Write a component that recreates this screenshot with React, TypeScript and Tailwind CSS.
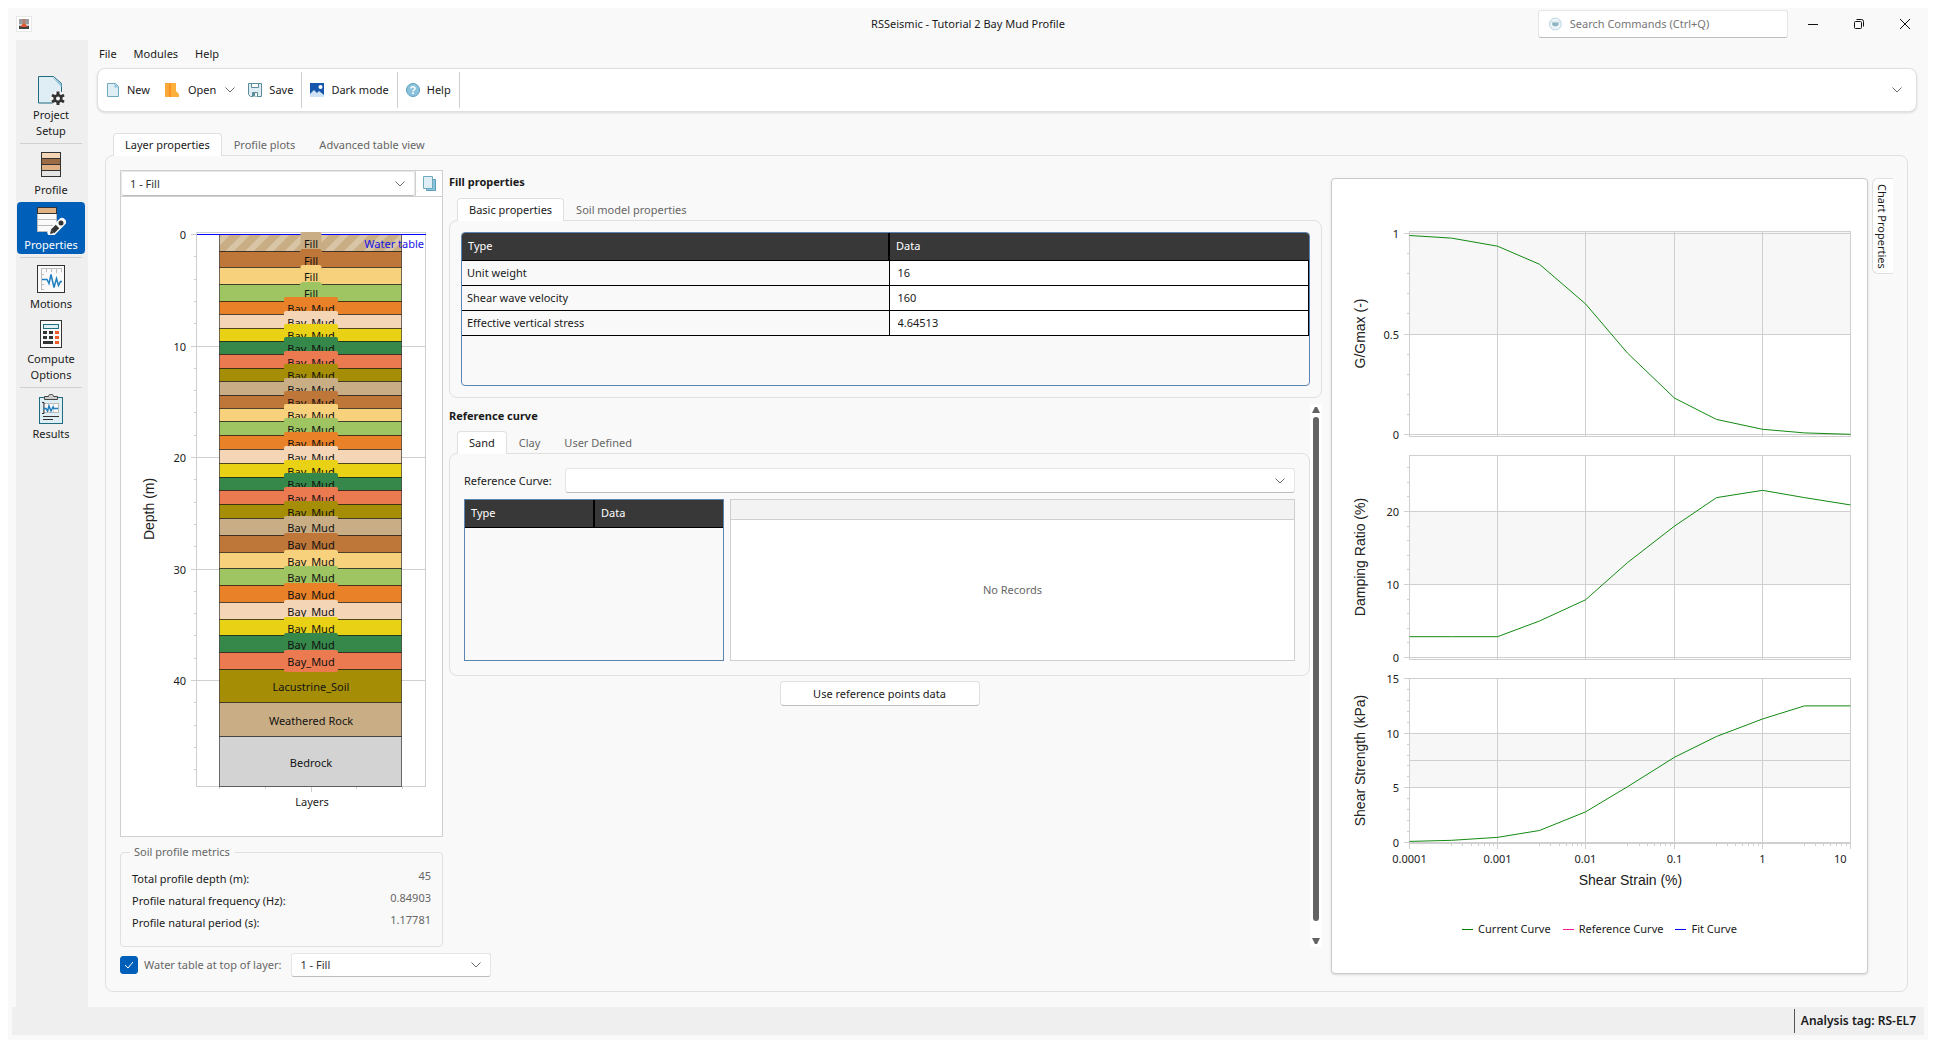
import { useState } from "react";
import type { ReactNode } from "react";
import clsx from "clsx";

/* ---------- data ---------- */

const palette = [
  "#c9ad84",
  "#be7739",
  "#f7d17c",
  "#9fc462",
  "#e88127",
  "#f4d6b6",
  "#e9d116",
  "#36884a",
  "#ec7a50",
  "#a58e06",
];

type Layer = { name: string; thickness: number; color: string };

const repeat = (name: string, thickness: number, count: number) =>
  Array.from({ length: count }, () => ({ name, thickness }));

const layers: Layer[] = [
  ...repeat("Fill", 1.5, 4),
  ...repeat("Bay_Mud", 1.2, 10),
  ...repeat("Bay_Mud", 1.25, 6),
  ...repeat("Bay_Mud", 1.5, 9),
  { name: "Lacustrine_Soil", thickness: 3 },
  { name: "Weathered Rock", thickness: 3 },
  { name: "Bedrock", thickness: 4.5 },
].map((l, i) => ({
  ...l,
  color: l.name === "Bedrock" ? "#d3d3d3" : palette[i % palette.length],
}));

const labelWidth: Record<string, number> = { Fill: 21, Bay_Mud: 54 };

const strains = [
  0.0001, 0.0003, 0.001, 0.003, 0.01, 0.03, 0.1, 0.3, 1, 3, 10,
];

const plots = [
  {
    title: "G/Gmax (-)",
    top: 52,
    bottom: 257,
    zero: 255,
    unit: 201,
    major: [0, 0.5, 1],
    lines: [0, 0.5, 1],
    minor: [0.1, 0.2, 0.3, 0.4, 0.6, 0.7, 0.8, 0.9],
    band: [0.5, 1],
    values: [0.99, 0.977, 0.937, 0.847, 0.65, 0.405, 0.181, 0.075, 0.026, 0.008, 0.001],
  },
  {
    title: "Damping Ratio (%)",
    top: 276,
    bottom: 480,
    zero: 478,
    unit: 7.3,
    major: [0, 10, 20],
    lines: [0, 10, 20],
    minor: [2, 4, 6, 8, 12, 14, 16, 18, 22, 24, 26],
    band: [10, 20],
    values: [2.85, 2.85, 2.85, 5, 7.9, 13, 18, 21.9, 22.9, 21.9, 20.9],
  },
  {
    title: "Shear Strength (kPa)",
    top: 499,
    bottom: 664,
    zero: 663,
    unit: 10.93,
    major: [0, 5, 10, 15],
    lines: [0, 5, 7.5, 10],
    minor: [1, 2, 3, 4, 6, 7, 8, 9, 11, 12, 13, 14],
    band: [5, 10],
    values: [0.1, 0.2, 0.47, 1.1, 2.8, 5.1, 7.8, 9.7, 11.3, 12.5, 12.5],
  },
];

const basicRows = [
  ["Unit weight", "16"],
  ["Shear wave velocity", "160"],
  ["Effective vertical stress", "4.64513"],
];

const metrics = [
  ["Total profile depth (m):", "45"],
  ["Profile natural frequency (Hz):", "0.84903"],
  ["Profile natural period (s):", "1.17781"],
];

/* ---------- icons ---------- */

const Chevron = ({ className }: { className?: string }) => (
  <svg width="10" height="6" viewBox="0 0 10 6" className={className}>
    <path d="M.5.5 5 5 9.500.5" fill="none" stroke="#6b6b6b" />
  </svg>
);

const AppIcon = () => (
  <svg width="16" height="16" viewBox="0 0 16 16">
    <rect x=".5" y=".5" width="15" height="15" fill="#fff" stroke="#e8e8e8" />
    <rect x="3" y="3" width="10" height="6" fill="#9b9b9b" />
    <rect x="3" y="8" width="10" height="2" fill="#d0d0d0" />
    <rect x="3" y="10" width="10" height="3" fill="#444" />
    <path d="M8 3v6M5.500 10.500l1-2h3l1 2z" stroke="#e0562b" fill="#e0562b" />
  </svg>
);

const SearchIcon = () => (
  <svg width="14" height="14" viewBox="0 0 14 14">
    <circle cx="7" cy="7" r="6.500" fill="#eef5f8" stroke="#b5cfd8" />
    <path d="M3.500 5h7v2.500L9 9.500H5L3.500 7.500z" fill="#8fb5c2" />
    <path d="M1 5h12" stroke="#c5dbe3" />
  </svg>
);

const ProjectIcon = () => (
  <svg width="28" height="30" viewBox="0 0 28 30">
    <path d="M1.500 1.500h15l8 7v19.500h-23z" fill="#dfeef4" stroke="#1f6b80" />
    <path d="M14.500 1.500l10 7.500v3z" fill="#8cc3dc" />
    <circle cx="21" cy="23.500" r="7.500" fill="#f6f6f6" />
    <g stroke="#333" strokeWidth="3">
      <path d="M21 16.500v14M15 20l12 7M27 20l-12 7" />
    </g>
    <circle cx="21" cy="23.500" r="4.500" fill="#333" />
    <circle cx="21" cy="23.500" r="2" fill="#f6f6f6" />
  </svg>
);

const ProfileIcon = () => (
  <svg width="20" height="26" viewBox="0 0 20 26" stroke="#333">
    <rect x=".5" y=".5" width="19" height="6" fill="#f4d6b6" />
    <rect x=".5" y="6.500" width="19" height="6" fill="#9b6b43" />
    <rect x=".5" y="12.500" width="19" height="6" fill="#dfb184" />
    <rect x=".5" y="18.500" width="19" height="6" fill="#e4e4e4" />
  </svg>
);

const PropertiesIcon = () => (
  <svg width="30" height="30" viewBox="0 0 30 30">
    <rect x="1.500" y="2.500" width="19" height="24" fill="#fafafa" stroke="#b9b9b9" />
    <path d="M1 14.500h20M1 20.500h20" stroke="#b9b9b9" />
    <rect x="1.500" y="2.500" width="19" height="6" fill="#dfb184" stroke="#333" />
    <path d="M15.500 27.500 26 17" stroke="#fafafa" strokeWidth="8" strokeLinecap="round" />
    <path d="M16.500 26.500 21.500 21.500" stroke="#333" strokeWidth="5" />
    <path d="M14 29l1-4 3 3z" fill="#333" />
    <circle cx="25" cy="18" r="2.500" fill="#333" />
  </svg>
);

const MotionsIcon = () => (
  <svg width="28" height="28" viewBox="0 0 28 28" fill="none">
    <rect x=".5" y=".5" width="27" height="27" fill="#fafafa" stroke="#333" />
    <path d="M4 3.500h21M4.500 3v22M9.500 4v3M14.500 4v3M19.500 4v4M24.500 4v3M5 9.500h2M5 14.500h2M5 19.500h2M5 24.500h2" stroke="#bdbdbd" />
    <path d="M5 14.500h5l2 4 2-9 3 13 2.500-9 2 7 2-4H25" stroke="#1f7fc0" strokeWidth="1.500" />
  </svg>
);

const ComputeIcon = () => (
  <svg width="22" height="28" viewBox="0 0 22 28">
    <rect x=".5" y=".5" width="21" height="27" fill="#fafafa" stroke="#333" />
    <rect x="3.500" y="4.500" width="15" height="4" fill="#dfeef4" stroke="#1f6b80" />
    <path d="M3 11h4v3H3zM9 11h4v3H9zM3 16h4v3H3zM9 16h4v3H9zM3 21h10v3H3z" fill="#333" />
    <path d="M15 11h4v3h-4zM15 16h4v3h-4zM15 21h4v3h-4z" fill="#f15a29" />
  </svg>
);

const ResultsIcon = () => (
  <svg width="24" height="30" viewBox="0 0 24 30" fill="none">
    <rect x=".5" y="3.500" width="23" height="26" fill="#dfeef4" stroke="#1f6b80" />
    <path d="M5.500 2.500h4c0-3 5-3 5 0h4v3h-13z" fill="#ccc" stroke="#444" />
    <rect x="4.500" y="9.500" width="15" height="9" fill="#fafafa" stroke="#b9b9b9" />
    <path d="M9.500 9v10M14.500 9v10" stroke="#ccc" />
    <path d="M3 8.500h2v11H3" stroke="#333" />
    <path d="M4 14.500h3l1.500 2.500 1.500-5 2 5 2-4 1 1.500h4" stroke="#1f7fc0" strokeWidth="1.500" />
    <path d="M4 22.500h16M4 25.500h10" stroke="#333" />
  </svg>
);

const NewIcon = () => (
  <svg width="14" height="16" viewBox="0 0 14 16">
    <path d="M1.500 1.500h8l3 3v10h-11z" fill="#dfeef4" stroke="#6fa9bd" />
    <path d="M8.500 1.500l4 4h-4z" fill="#8cc3dc" />
  </svg>
);

const OpenIcon = () => (
  <svg width="14" height="16" viewBox="0 0 14 16">
    <path d="M0 1h11v8l3 3v3H0z" fill="#fbb040" />
    <path d="M4 1h2v14H4z" fill="#f7931e" />
    <path d="M0 1h4v13H0z" fill="#f9a93a" />
  </svg>
);

const SaveIcon = () => (
  <svg width="14" height="14" viewBox="0 0 14 14">
    <path d="M.5.5h13v13h-11l-2-2z" fill="#dfeef4" stroke="#5b8c9c" />
    <path d="M3.500.5h7v4h-7zM4.500 13.500v-4h5v4" fill="#fafafa" stroke="#5b8c9c" />
    <path d="M5 10h2v3H5z" fill="#5b8c9c" />
  </svg>
);

const PictureIcon = () => (
  <svg width="14" height="14" viewBox="0 0 14 14">
    <rect width="14" height="14" fill="#1857ab" />
    <path d="M0 14v-3l4-4 3 3 2-2 5 4v2z" fill="#cfe3f5" />
    <circle cx="10.500" cy="4" r="2" fill="#fff" />
  </svg>
);

const HelpIcon = () => (
  <svg width="14" height="14" viewBox="0 0 14 14" fill="none">
    <circle cx="7" cy="7" r="6.500" fill="#8cc3dc" stroke="#5a9fbd" />
    <path d="M5 5.500c0-2.500 4-2.500 4 0 0 1.500-2 1.500-2 3" stroke="#fff" strokeWidth="1.500" />
    <rect x="6" y="9.500" width="2" height="1.500" fill="#fff" />
  </svg>
);

const CopyIcon = () => (
  <svg width="13" height="15" viewBox="0 0 13 15">
    <path d="M3.500 3.500h9v11h-9z" fill="#8cc3dc" stroke="#5a9fbd" />
    <path d="M.5.5h9v12h-9z" fill="#dfeef4" stroke="#6fa9bd" />
  </svg>
);

/* ---------- small parts ---------- */

const SideItem = ({
  icon,
  label,
  active,
}: {
  icon: ReactNode;
  label: string;
  active?: boolean;
}) => (
  <button
    className={clsx(
      "flex w-full flex-col items-center rounded px-2 pt-0.5 pb-px leading-4",
      active && "bg-[#005fb8] text-white"
    )}
  >
    <span className="mb-px flex h-8 items-center">{icon}</span>
    {label}
  </button>
);

const SideRule = () => <hr className="mx-[3px] w-[62px] border-[#cfcfcf]" />;

const ToolRule = () => <span className="h-9 w-px bg-[#cfcfcf]" />;

const Tabs = ({ items }: { items: string[] }) => {
  const [current, setCurrent] = useState(0);
  return (
    <div role="tablist" className="relative z-10 -mb-px ml-2 flex h-[23px]">
      {items.map((item, i) => (
        <button
          key={item}
          role="tab"
          aria-selected={i === current}
          onClick={() => setCurrent(i)}
          className={clsx(
            "rounded-t border border-b-0 px-[11px]",
            i === current
              ? "border-[#e0e0e0] bg-white text-[#1a1a1a]"
              : "border-transparent text-[#666]"
          )}
        >
          {item}
        </button>
      ))}
    </div>
  );
};

const Select = ({
  id,
  label,
  options,
  className,
}: {
  id: string;
  label?: string;
  options: string[];
  className?: string;
}) => (
  <div className={clsx("relative flex", className)}>
    <select
      id={id}
      aria-label={label}
      className="w-full appearance-none rounded-[3px] border border-[#e5e5e5] border-b-[#bdbdbd] bg-white px-2 text-[#333]"
    >
      {options.map((o) => (
        <option key={o}>{o}</option>
      ))}
    </select>
    <Chevron className="pointer-events-none absolute top-1/2 right-2.5 -translate-y-1/2" />
  </div>
);

/* ---------- charts ---------- */

const ProfileChart = () => {
  const y = (depth: number) => Math.round(37 + depth * 11.15) + 0.5;
  let depth = 0;
  const bars = layers.map((l) => {
    const top = depth;
    depth += l.thickness;
    return { ...l, y0: y(top), y1: y(depth) };
  });
  return (
    <svg viewBox="0 0 321 639" className="block w-full text-[11px]" fill="#222">
      <defs>
        <pattern id="hatch" width="14" height="14" patternUnits="userSpaceOnUse" patternTransform="rotate(45)">
          <rect width="14" height="14" fill="#c9ad84" />
          <rect width="6" height="14" fill="#d8c5a6" />
        </pattern>
      </defs>
      <rect x="75.500" y="35.500" width="229" height="554" fill="#fff" stroke="#cfcfcf" />
      {[0, 10, 20, 30, 40].map((d) => (
        <g key={d}>
          <path d={`M70 ${y(d)}H304`} stroke="#cfcfcf" />
          <text x="65" y={y(d) + 4} textAnchor="end">
            {d}
          </text>
        </g>
      ))}
      {Array.from({ length: 25 }, (_, i) => i * 2).map((d) => (
        <path key={d} d={`M73 ${y(d)}h2`} stroke="#cfcfcf" />
      ))}
      <path d="M98.500 590v2M144.500 590v2M190.500 590v5M235.500 590v2M281.500 590v2" stroke="#cfcfcf" />
      {bars.map((b, i) => (
        <rect
          key={i}
          x="98.500"
          y={b.y0}
          width="182"
          height={b.y1 - b.y0}
          fill={i === 0 ? "url(#hatch)" : b.color}
          stroke="#000"
          strokeOpacity="0.55"
        />
      ))}
      <path d="M76 37.500H305" stroke="#00f" />
      {bars.map((b, i) => {
        const mid = Math.round((b.y0 + b.y1) / 2);
        const w = labelWidth[b.name];
        return (
          <g key={i}>
            {w && <rect x={190 - w / 2} y={mid - 11} width={w} height="22" rx="2" fill={b.color} />}
            <text x="190" y={mid + 5} textAnchor="middle" fill="#111">
              {b.name}
            </text>
          </g>
        );
      })}
      <text x="303" y="51" textAnchor="end" fill="#1414e6">
        Water table
      </text>
      <text x="191" y="609" textAnchor="middle">
        Layers
      </text>
      <text
        transform="translate(33 312) rotate(-90)"
        textAnchor="middle"
        className="font-['Liberation_Sans',sans-serif] text-[14px]"
      >
        Depth (m)
      </text>
    </svg>
  );
};

const CurveCharts = () => {
  const x = (strain: number) => 77.5 + Math.round(88.2 * (Math.log10(strain) + 4));
  const decades = [0.0001, 0.001, 0.01, 0.1, 1, 10];
  return (
    <svg viewBox="0 0 535 690" className="block w-full text-[11px]" fill="#222">
      {plots.map((p) => {
        const y = (v: number) => Math.round(p.zero - v * p.unit) + 0.5;
        const bandTop = p.band[1] === 1 ? p.top : y(p.band[1]);
        return (
          <g key={p.title}>
            <rect x="78" y={bandTop} width="440" height={y(p.band[0]) - bandTop} fill="#f7f7f7" />
            <g stroke="#cfcfcf" fill="none">
              <rect x="77.500" y={p.top + 0.5} width="441" height={p.bottom - p.top} />
              {decades.map((d) => (
                <path key={d} d={`M${x(d)} ${p.top}V${p.bottom}`} />
              ))}
              {p.lines.map((v) => (
                <path key={v} d={`M77 ${y(v)}H518`} />
              ))}
              {p.major.map((v) => (
                <path key={v} d={`M72 ${y(v)}h5`} />
              ))}
              {p.minor.map((v) => (
                <path key={v} d={`M75 ${y(v)}h2`} />
              ))}
            </g>
            {p.major.map((v) => (
              <text key={v} x="67" y={y(v) + 4} textAnchor="end">
                {v}
              </text>
            ))}
            <polyline
              points={strains.map((s, i) => `${x(s)},${p.zero + 0.5 - p.values[i] * p.unit}`).join(" ")}
              fill="none"
              stroke="#128a12"
            />
            <text
              transform={`translate(33 ${(p.top + p.bottom) / 2}) rotate(-90)`}
              textAnchor="middle"
              className="font-['Liberation_Sans',sans-serif] text-[14px]"
            >
              {p.title}
            </text>
          </g>
        );
      })}
      {decades.map((d) => (
        <path key={d} d={`M${x(d)} 664v6`} stroke="#cfcfcf" />
      ))}
      {decades.slice(0, 5).flatMap((d) =>
        [3, 4, 5, 6, 7, 8, 9].map((k) => (
          <path key={`${d}-${k}`} d={`M${x(d * k)} 664v3`} stroke="#cfcfcf" />
        ))
      )}
      {decades.map((d) => (
        <text key={d} x={d === 10 ? x(d) - 4 : x(d)} y="684" textAnchor={d === 10 ? "end" : "middle"}>
          {d}
        </text>
      ))}
    </svg>
  );
};

const LegendEntry = ({ color, label }: { color: string; label: string }) => (
  <span className="flex items-center gap-[5px]">
    <svg width="11" height="1">
      <rect width="11" height="1" fill={color} />
    </svg>
    {label}
  </span>
);

/* ---------- page ---------- */

export default function App() {
  return (
    <div className="h-screen min-h-[1040px] bg-white p-2 font-['Noto_Sans',sans-serif] text-[11px] leading-4 text-[#1a1a1a]">
      <div className="flex h-full flex-col bg-[#f9f9f9]">
        {/* TITLE BAR */}
        <header className="grid h-8 grid-cols-[1fr_auto_1fr] items-center px-2">
          <AppIcon />
          <h1>RSSeismic - Tutorial 2 Bay Mud Profile</h1>
          <div className="flex items-center justify-end pr-0.5">
            <label className="mr-[18px] flex h-7 w-[250px] items-center gap-2 rounded-[3px] border border-[#e5e5e5] border-b-[#bdbdbd] bg-white px-2.5">
              <SearchIcon />
              <input
                aria-label="Search Commands"
                placeholder="Search Commands (Ctrl+Q)"
                className="w-full outline-none placeholder:text-[#767676]"
              />
            </label>
            <button aria-label="Minimize" className="flex w-[46px] pl-0.5">
              <svg width="10" height="10" stroke="#111">
                <path d="M0 5.500h10" />
              </svg>
            </button>
            <button aria-label="Restore" className="flex w-[46px] pl-0.5">
              <svg width="10" height="10" stroke="#111" fill="none">
                <rect x=".5" y="2.500" width="7" height="7" rx="1" />
                <path d="M2.500.5h5a2 2 0 0 1 2 2v5" />
              </svg>
            </button>
            <button aria-label="Close" className="flex w-5 pl-0.5">
              <svg width="10" height="10" stroke="#111">
                <path d="M0 0l10 10M10 0 0 10" />
              </svg>
            </button>
          </div>
        </header>

        <div className="flex min-h-0 flex-1">
          {/* SIDEBAR */}
          <nav className="ml-2 flex w-[72px] flex-col gap-[3px] bg-[#efefef] pt-8 pr-[3px] pl-px">
            <SideItem icon={<ProjectIcon />} label="Project Setup" />
            <SideRule />
            <SideItem icon={<ProfileIcon />} label="Profile" />
            <SideItem icon={<PropertiesIcon />} label="Properties" active />
            <SideRule />
            <SideItem icon={<MotionsIcon />} label="Motions" />
            <SideItem icon={<ComputeIcon />} label="Compute Options" />
            <SideRule />
            <SideItem icon={<ResultsIcon />} label="Results" />
          </nav>

          <div className="flex min-w-0 flex-1 flex-col pl-[9px]">
            <div className="flex h-7 items-center gap-[17px] pl-0.5">
              <button>File</button>
              <button>Modules</button>
              <button>Help</button>
            </div>

            {/* TOOLBAR */}
            <div className="mr-[11px] flex h-11 items-center rounded-lg border border-[#e0e0e0] bg-white pr-3.5 pl-2 shadow-sm">
              <button className="flex items-center gap-[7px]">
                <NewIcon />
                New
              </button>
              <button className="ml-[15px] flex items-center gap-[9px]">
                <OpenIcon />
                Open
                <Chevron />
              </button>
              <button className="ml-[13px] flex items-center gap-[7px] pr-2">
                <SaveIcon />
                Save
              </button>
              <ToolRule />
              <button className="flex items-center gap-[7px] px-2">
                <PictureIcon />
                Dark mode
              </button>
              <ToolRule />
              <button className="flex items-center gap-[7px] px-2">
                <HelpIcon />
                Help
              </button>
              <ToolRule />
              <button aria-label="Collapse toolbar" className="ml-auto">
                <Chevron />
              </button>
            </div>

            <div className="mt-[21px] mr-5 mb-[15px] ml-2 flex min-h-0 flex-1 flex-col">
              <Tabs items={["Layer properties", "Profile plots", "Advanced table view"]} />
              <div className="flex min-h-0 flex-1 rounded-lg border border-[#e0e0e0] pt-3.5 pr-3.5 pl-3.5">
                <div className="flex min-w-0 flex-1 flex-col">
                  <div className="flex gap-1.5">
                    {/* SOIL PROFILE */}
                    <div className="w-[323px] shrink-0">
                      <div className="border border-[#cfcfcf] bg-white">
                        <div className="flex h-[26px] border-b border-[#cfcfcf]">
                          <Select id="layer" label="Layer" options={["1 - Fill"]} className="flex-1" />
                          <button
                            aria-label="Copy layer"
                            className="flex w-[27px] items-center justify-center border-l border-[#cfcfcf]"
                          >
                            <CopyIcon />
                          </button>
                        </div>
                        <ProfileChart />
                      </div>
                      <fieldset className="mt-[7px] h-[103px] rounded border border-[#e0e0e0] px-[11px] pt-2">
                        <legend className="-ml-0.5 px-1 text-[#666]">Soil profile metrics</legend>
                        <dl className="grid grid-cols-[1fr_auto] gap-y-[3px]">
                          {metrics.map(([name, value]) => (
                            <div key={name} className="contents">
                              <dt className="pt-[3px]">{name}</dt>
                              <dd className="text-right text-[#666]">{value}</dd>
                            </div>
                          ))}
                        </dl>
                      </fieldset>
                    </div>

                    {/* LAYER DATA */}
                    <div className="flex min-w-0 flex-1 flex-col">
                      <h2 className="mt-1 mb-2 font-bold">Fill properties</h2>
                      <Tabs items={["Basic properties", "Soil model properties"]} />
                      <div className="h-[178px] rounded-lg border border-[#e0e0e0] p-[11px]">
                        <div className="h-full overflow-hidden rounded border border-[#5b84b1]">
                          <table className="w-full border-collapse text-left">
                            <thead className="bg-[#383838] text-white">
                              <tr className="h-[27px]">
                                <th className="w-[427px] border-b border-black px-1.5 font-normal">Type</th>
                                <th className="border-b border-l-2 border-black px-1.5 font-normal">Data</th>
                              </tr>
                            </thead>
                            <tbody>
                              {basicRows.map(([name, value]) => (
                                <tr key={name} className="h-[25px] border-b border-black">
                                  <td className="px-[5px]">{name}</td>
                                  <td className="border-x border-black bg-white">
                                    <input
                                      aria-label={name}
                                      defaultValue={value}
                                      className="block w-full px-2 outline-none"
                                    />
                                  </td>
                                </tr>
                              ))}
                            </tbody>
                          </table>
                        </div>
                      </div>

                      <div className="mt-1.5 flex min-h-0 flex-1">
                        <div className="min-w-0 flex-1">
                          <h2 className="mt-1 mb-[7px] font-bold">Reference curve</h2>
                          <Tabs items={["Sand", "Clay", "User Defined"]} />
                          <div className="rounded-lg border border-[#e0e0e0] p-3.5">
                            <div className="flex h-[25px] items-center">
                              <label htmlFor="curve" className="w-[101px]">
                                Reference Curve:
                              </label>
                              <Select id="curve" options={[""]} className="h-[25px] flex-1" />
                            </div>
                            <div className="mt-1.5 flex h-[162px] gap-1.5">
                              <div className="w-[260px] border border-[#5b84b1]">
                                <table className="w-full table-fixed border-collapse text-left">
                                  <thead className="bg-[#383838] text-white">
                                    <tr className="h-[27px]">
                                      <th className="border-b border-black px-1.5 font-normal">Type</th>
                                      <th className="border-b border-l-2 border-black px-1.5 font-normal">Data</th>
                                    </tr>
                                  </thead>
                                </table>
                              </div>
                              <div className="flex flex-1 flex-col border border-[#cfcfcf] bg-white">
                                <div className="h-5 border-b border-[#cfcfcf] bg-[#f3f3f3]" />
                                <p className="flex flex-1 items-center justify-center text-[#666]">No Records</p>
                              </div>
                            </div>
                          </div>
                          <button className="mx-auto mt-[5px] block h-[25px] w-[200px] rounded border border-[#e0e0e0] border-b-[#bdbdbd] bg-white">
                            Use reference points data
                          </button>
                        </div>
                        {/* SCROLL BAR */}
                        <div className="flex w-3 flex-col items-center bg-white py-[3px]">
                          <svg width="8" height="6" fill="#636363">
                            <path d="M0 6 3 0h2l3 6z" />
                          </svg>
                          <div className="mt-1 mb-[17px] w-1.5 flex-1 rounded-full bg-[#636363]" />
                          <svg width="8" height="6" fill="#636363">
                            <path d="M0 0h8L5 6H3z" />
                          </svg>
                        </div>
                      </div>
                    </div>
                  </div>

                  <div className="mt-1.5 flex h-6 items-center">
                    <input
                      id="water"
                      type="checkbox"
                      defaultChecked
                      className="peer size-[18px] appearance-none rounded-[3px] border border-[#868686] bg-white checked:border-[#005fb8] checked:bg-[#005fb8]"
                    />
                    <svg width="10" height="8" className="pointer-events-none invisible -ml-3.5 mr-1 peer-checked:visible">
                      <path d="M1 4l3 3 5-6" fill="none" stroke="#fff" />
                    </svg>
                    <label htmlFor="water" className="ml-1.5 text-[#666]">
                      Water table at top of layer:
                    </label>
                    <Select id="waterLayer" label="Water table layer" options={["1 - Fill"]} className="ml-2.5 h-6 w-[200px]" />
                  </div>
                </div>

                {/* CURVES */}
                <section className="mt-2 ml-[9px] h-[796px] w-[537px] shrink-0 rounded border border-[#cbcbcb] bg-white shadow-sm">
                  <CurveCharts />
                  <p className="mt-px pl-[62px] text-center font-['Liberation_Sans',sans-serif] text-[14px] leading-5">
                    Shear Strain (%)
                  </p>
                  <div className="mt-[31px] flex justify-center gap-3">
                    <LegendEntry color="#008000" label="Current Curve" />
                    <LegendEntry color="#ff1493" label="Reference Curve" />
                    <LegendEntry color="#0000ff" label="Fit Curve" />
                  </div>
                </section>
                <button className="mt-2 ml-1 flex h-24 w-[21px] items-center justify-center rounded-l-md border border-r-0 border-[#e0e0e0] bg-white pr-[3px] [writing-mode:vertical-rl]">
                  Chart Properties
                </button>
              </div>
            </div>
          </div>
        </div>

        {/* STATUS BAR */}
        <footer className="mx-1 mb-[5px] flex h-7 items-center justify-end bg-[#efefef] pr-2">
          <span className="flex h-6 items-center border-l border-[#555] pl-1.5 text-[12px] font-semibold">
            Analysis tag: RS-EL7
          </span>
        </footer>
      </div>
    </div>
  );
}
